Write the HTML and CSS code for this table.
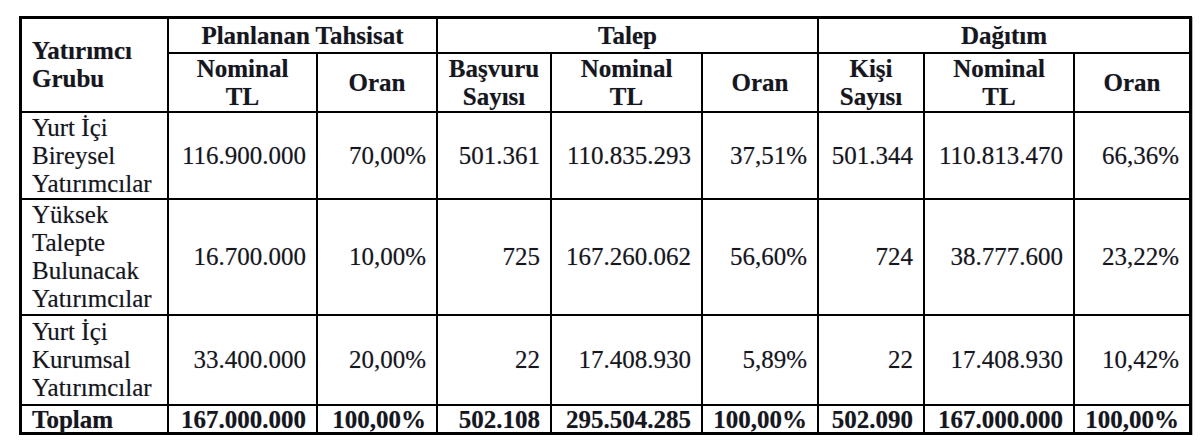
FILE: index.html
```html
<!DOCTYPE html>
<html>
<head>
<meta charset="utf-8">
<title>Dağıtım Tablosu</title>
<link rel="stylesheet" href="styles.css">
</head>
<body>
<div class="page">
<table class="alloc">
  <colgroup>
    <col class="c1"><col class="c2"><col class="c3"><col class="c4"><col class="c5"><col class="c6"><col class="c7"><col class="c8"><col class="c9">
  </colgroup>
  <thead>
    <tr class="h1">
      <th rowspan="2" class="grp">Yatırımcı<br>Grubu</th>
      <th colspan="2">Planlanan Tahsisat</th>
      <th colspan="3">Talep</th>
      <th colspan="3" class="last">Dağıtım</th>
    </tr>
    <tr class="h2">
      <th>Nominal<br>TL</th>
      <th>Oran</th>
      <th>Başvuru<br>Sayısı</th>
      <th>Nominal<br>TL</th>
      <th>Oran</th>
      <th>Kişi<br>Sayısı</th>
      <th>Nominal<br>TL</th>
      <th class="last">Oran</th>
    </tr>
  </thead>
  <tbody>
    <tr class="r3">
      <td class="name">Yurt İçi<br>Bireysel<br>Yatırımcılar</td>
      <td>116.900.000</td><td>70,00%</td><td>501.361</td><td>110.835.293</td><td>37,51%</td><td>501.344</td><td>110.813.470</td><td class="last">66,36%</td>
    </tr>
    <tr class="r4">
      <td class="name">Yüksek<br>Talepte<br>Bulunacak<br>Yatırımcılar</td>
      <td>16.700.000</td><td>10,00%</td><td>725</td><td>167.260.062</td><td>56,60%</td><td>724</td><td>38.777.600</td><td class="last">23,22%</td>
    </tr>
    <tr class="r3b">
      <td class="name">Yurt İçi<br>Kurumsal<br>Yatırımcılar</td>
      <td>33.400.000</td><td>20,00%</td><td>22</td><td>17.408.930</td><td>5,89%</td><td>22</td><td>17.408.930</td><td class="last">10,42%</td>
    </tr>
    <tr class="total">
      <td class="name">Toplam</td>
      <td>167.000.000</td><td>100,00%</td><td>502.108</td><td>295.504.285</td><td>100,00%</td><td>502.090</td><td>167.000.000</td><td class="last">100,00%</td>
    </tr>
  </tbody>
</table>
</div>
</body>
</html>
```
FILE: styles.css
```css
html, body {
  margin: 0;
  padding: 0;
  background: #ffffff;
}

.page {
  padding: 16px 0 0 19px;
  font-family: "Liberation Serif", serif;
}

.alloc {
  border-collapse: separate;
  border-spacing: 0;
  table-layout: fixed;
  width: 1173px;
  border-left: 3px solid #000;
  border-top: 3px solid #000;
  font-family: "Liberation Serif", serif;
  font-size: 25px;
  line-height: 28px;
  color: #16161e;
  box-shadow: 1px 1px 0 #b8b8b8;
}

.c1 { width: 147px; }
.c2 { width: 149px; }
.c3 { width: 120px; }
.c4 { width: 114px; }
.c5 { width: 151px; }
.c6 { width: 116px; }
.c7 { width: 106px; }
.c8 { width: 150px; }
.c9 { width: 117px; }

.alloc th,
.alloc td {
  box-sizing: border-box;
  border-right: 2px solid #000;
  border-bottom: 2px solid #000;
  padding: 0 10px;
  vertical-align: middle;
  font-family: "Liberation Serif", serif;
  text-shadow: 0 0 1px rgba(20, 20, 30, 0.35);
}

.alloc th {
  font-weight: 700;
  text-align: center;
}

.alloc th.grp {
  text-align: left;
}

.alloc td {
  font-weight: 400;
  text-align: right;
  white-space: nowrap;
}

.alloc td.name {
  text-align: left;
}

.alloc .last {
  border-right-width: 3px;
}

.h1 th { height: 35px; }
.h2 th { height: 59px; }
.r3 td { height: 87px; }
.r4 td { height: 116px; }
.r3b td { height: 90px; }

.alloc .total td {
  height: 29px;
  line-height: 25px;
  font-weight: 700;
  border-bottom-width: 3px;
}
```
